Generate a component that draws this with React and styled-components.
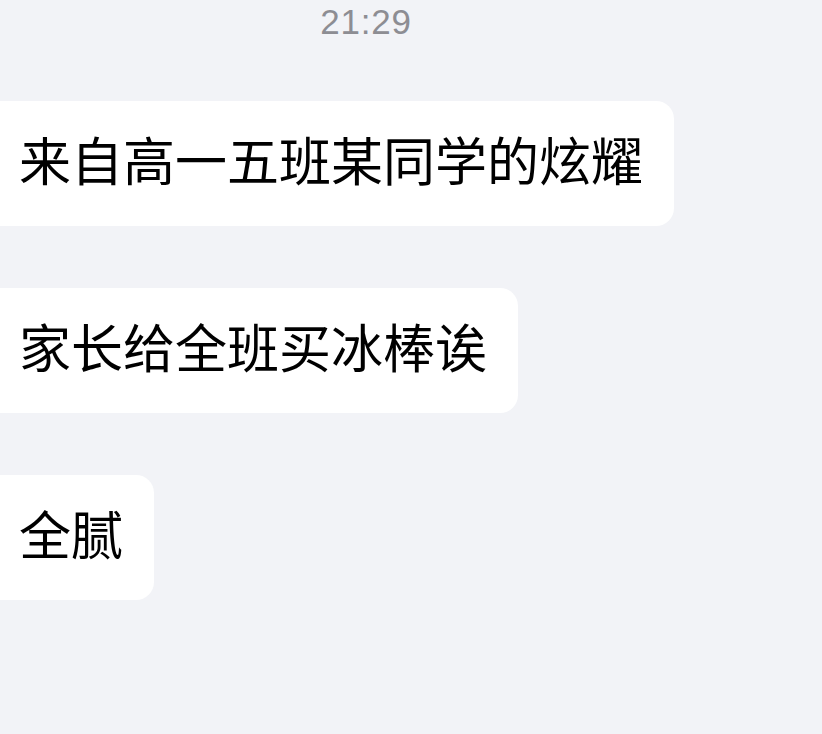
import React from "react";
import styled, { createGlobalStyle } from "styled-components";

const Global = createGlobalStyle`
  html, body {
    margin: 0;
    padding: 0;
    background: #f2f3f7;
  }
`;

const Screen = styled.div`
  width: 822px;
  height: 734px;
  overflow: hidden;
  background: #f2f3f7;
  display: flex;
  flex-direction: column;
`;

const Time = styled.div`
  width: 732px;
  height: 101px;
  padding-top: 2px;
  box-sizing: border-box;
  text-align: center;
  font-family: "Liberation Sans", Arial, sans-serif;
  font-size: 35px;
  color: #8d8d93;
  letter-spacing: 0.8px;
`;

const Thread = styled.div`
  display: flex;
  flex-direction: column;
  align-items: flex-start;
  gap: 62px;
`;

const Bubble = styled.div`
  background: #ffffff;
  height: 125px;
  display: flex;
  align-items: center;
  padding: 0 31px 0 19px;
  border-radius: 0 18px 18px 0;
  font-family: "Noto Sans CJK SC", "PingFang SC", sans-serif;
  font-size: 52px;
  line-height: 1;
  color: #000;
  white-space: nowrap;
`;

const Label = styled.span`
  display: block;
  margin-top: -9px;
`;

const messages = ["来自高一五班某同学的炫耀", "家长给全班买冰棒诶", "全腻"];

export default function App() {
  return (
    <Screen>
      <Global />
      <Time>21:29</Time>
      <Thread>
        {messages.map((m) => (
          <Bubble key={m}>
            <Label>{m}</Label>
          </Bubble>
        ))}
      </Thread>
    </Screen>
  );
}
